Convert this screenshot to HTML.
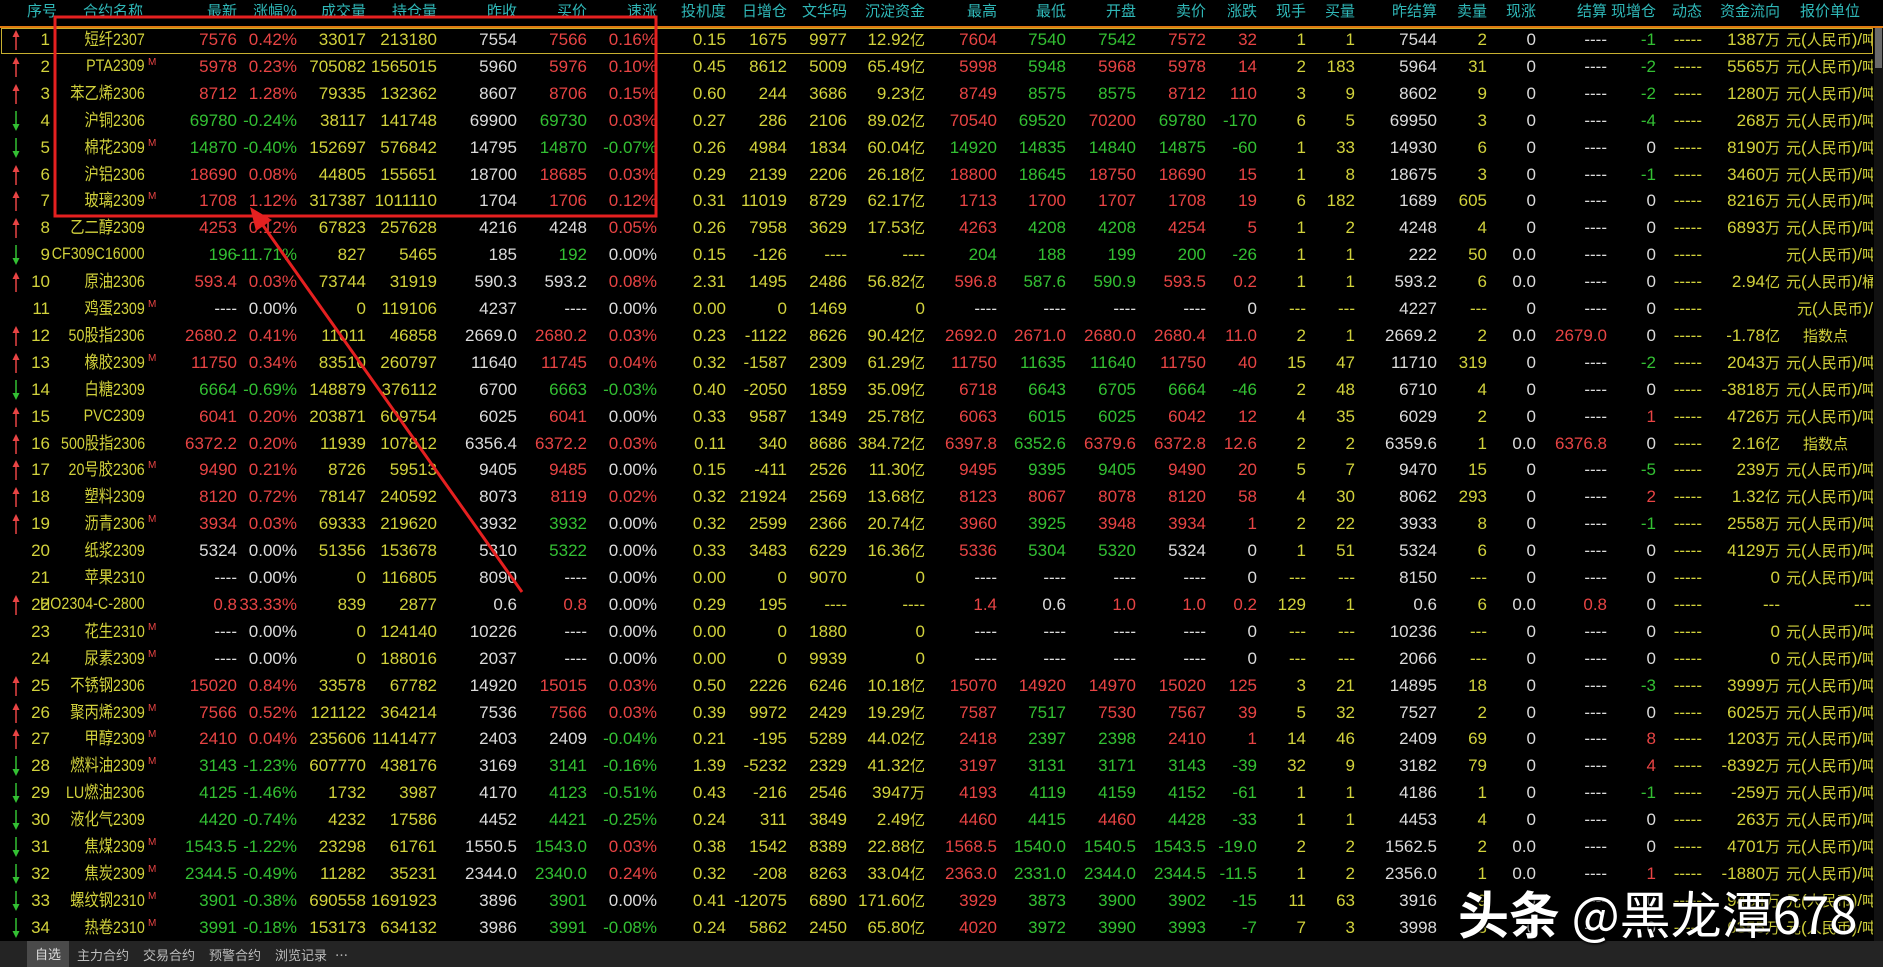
<!DOCTYPE html>
<html><head><meta charset="utf-8">
<style>
html,body{margin:0;padding:0;background:#000;width:1883px;height:967px;overflow:hidden;}
body{position:relative;font-family:"Liberation Sans","Noto Sans CJK SC",sans-serif;font-size:17px;}
.c{position:absolute;white-space:nowrap;line-height:20px;}
.r{text-align:right;}
.nm{display:inline-block;vertical-align:top;line-height:20px;height:20px;position:relative;top:-2px;font-family:"Liberation Sans","Noto Sans CJK SC",sans-serif;font-size:17px;transform:scaleX(0.84);transform-origin:right center;}
.nm.lat{top:-1px;}
.nm .cj{font-size:17px;line-height:20px;}
.cj{font-family:"Noto Sans CJK SC",sans-serif;font-size:15px;}
.h{color:#2fb8b8;font-size:15px;font-family:"Noto Sans CJK SC",sans-serif;}
.Y{color:#d2d23c}.W{color:#dcdcdc}.R{color:#e84444}.G{color:#33c033}
.m{color:#e84444;font-size:10px;position:relative;top:-7px;font-family:"Liberation Sans",sans-serif;}
#clip{position:absolute;left:0;top:0;width:1873px;height:941px;overflow:hidden;}
#tabs{position:absolute;left:0;top:941px;width:1883px;height:26px;background:#242424;font-family:"Noto Sans CJK SC",sans-serif;font-size:13px;color:#bdbdbd;}
#tabs span{position:absolute;top:4px;}
</style></head><body>
<div id="clip"></div>
<div style="position:absolute;left:0;top:26px;width:1883px;height:2px;background:#e07a10"></div>
<div style="position:absolute;left:1px;top:28px;width:1870px;height:24px;border:1px solid #c8b030"></div>
<div style="position:absolute;left:1874px;top:28px;width:9px;height:913px;background:#111"></div>
<div style="position:absolute;left:1875px;top:28px;width:7px;height:40px;background:#6a6a6a"></div>
<div id="tabs"><span style="left:27px;top:0;width:42px;height:26px;background:#4a4a4a;line-height:26px;text-align:center;color:#ddd">自选</span><span style="left:77px">主力合约</span><span style="left:143px">交易合约</span><span style="left:209px">预警合约</span><span style="left:275px">浏览记录</span><span style="left:335px">…</span></div>
<svg style="position:absolute;left:0;top:0" width="1883" height="967">
<rect x="55" y="17" width="601" height="199" fill="none" stroke="#e52020" stroke-width="3"/>
<line x1="522" y1="592" x2="262" y2="224" stroke="#e52020" stroke-width="3"/>
<polygon points="250,207 272,220 256,231" fill="#e52020"/>
</svg>
<div style="position:absolute;left:1458px;top:880px;font-family:'Noto Sans CJK SC',sans-serif;font-size:51px;line-height:64px;color:#fff;text-shadow:0 0 3px #000,1px 1px 2px #000;white-space:nowrap"><b>头条</b> @黑龙潭678</div>
<script>
var clip=document.getElementById('clip');
function add(x,y,txt,cls,right,extra){var d=document.createElement('div');d.className='c '+cls+(right?' r':'');
if(right){d.style.right=(1873-x)+'px';}else d.style.left=x+'px';d.style.top=y+'px';d.innerHTML=txt;if(extra)d.style.cssText+=extra;clip.appendChild(d);}
function cj(s){return s.replace(/([\u4e00-\u9fff（）]+)/g,'<span class="cj">$1</span>');}
var R=[237,297,366,437,517,587,657,726,787,847,925,997,1066,1136,1206,1257,1306,1355,1437,1487,1536,1607,1656,1702,1780];
var heads=['最新','涨幅%','成交量','持仓量','昨收','买价','速涨','投机度','日增仓','文华码','沉淀资金','最高','最低','开盘','卖价','涨跌','现手','买量','昨结算','卖量','现涨','结算','现增仓','动态','资金流向'];
add(27,1,'序号','h');add(143,1,'合约名称','h',1);
heads.forEach(function(h,i){add(R[i],1,h,'h',1);});
add(1860,1,'报价单位','h',1);
var D=[
['u','短纤2307',0,'7576','0.42%','33017','213180','7554','7566','0.16%','0.15','1675','9977','12.92亿','7604','7540','7542','7572','32','1','1','7544','2','0','----','-1','-----','1387万','元(人民币)/吨'],
['u','PTA2309',1,'5978','0.23%','705082','1565015','5960','5976','0.10%','0.45','8612','5009','65.49亿','5998','5948','5968','5978','14','2','183','5964','31','0','----','-2','-----','5565万','元(人民币)/吨'],
['u','苯乙烯2306',0,'8712','1.28%','79335','132362','8607','8706','0.15%','0.60','244','3686','9.23亿','8749','8575','8575','8712','110','3','9','8602','9','0','----','-2','-----','1280万','元(人民币)/吨'],
['d','沪铜2306',0,'69780','-0.24%','38117','141748','69900','69730','0.03%','0.27','286','2106','89.02亿','70540','69520','70200','69780','-170','6','5','69950','3','0','----','-4','-----','268万','元(人民币)/吨'],
['d','棉花2309',1,'14870','-0.40%','152697','576842','14795','14870','-0.07%','0.26','4984','1834','60.04亿','14920','14835','14840','14875','-60','1','33','14930','6','0','----','0','-----','8190万','元(人民币)/吨'],
['u','沪铝2306',0,'18690','0.08%','44805','155651','18700','18685','0.03%','0.29','2139','2206','26.18亿','18800','18645','18750','18690','15','1','8','18675','3','0','----','-1','-----','3460万','元(人民币)/吨'],
['u','玻璃2309',1,'1708','1.12%','317387','1011110','1704','1706','0.12%','0.31','11019','8729','62.17亿','1713','1700','1707','1708','19','6','182','1689','605','0','----','0','-----','8216万','元(人民币)/吨'],
['u','乙二醇2309',0,'4253','0.12%','67823','257628','4216','4248','0.05%','0.26','7958','3629','17.53亿','4263','4208','4208','4254','5','1','2','4248','4','0','----','0','-----','6893万','元(人民币)/吨'],
['d','CF309C16000',0,'196','-11.71%','827','5465','185','192','0.00%','0.15','-126','----','----','204','188','199','200','-26','1','1','222','50','0.0','----','0','-----','','元(人民币)/吨'],
['u','原油2306',0,'593.4','0.03%','73744','31919','590.3','593.2','0.08%','2.31','1495','2486','56.82亿','596.8','587.6','590.9','593.5','0.2','1','1','593.2','6','0.0','----','0','-----','2.94亿','元(人民币)/桶'],
['','鸡蛋2309',1,'----','0.00%','0','119106','4237','----','0.00%','0.00','0','1469','0','----','----','----','----','0','---','---','4227','---','0','----','0','-----','','元(人民币)/500千克'],
['u','50股指2306',0,'2680.2','0.41%','11011','46858','2669.0','2680.2','0.03%','0.23','-1122','8626','90.42亿','2692.0','2671.0','2680.0','2680.4','11.0','2','1','2669.2','2','0.0','2679.0','0','-----','-1.78亿','　指数点'],
['u','橡胶2309',1,'11750','0.34%','83510','260797','11640','11745','0.04%','0.32','-1587','2309','61.29亿','11750','11635','11640','11750','40','15','47','11710','319','0','----','-2','-----','2043万','元(人民币)/吨'],
['d','白糖2309',0,'6664','-0.69%','148879','376112','6700','6663','-0.03%','0.40','-2050','1859','35.09亿','6718','6643','6705','6664','-46','2','48','6710','4','0','----','0','-----','-3818万','元(人民币)/吨'],
['u','PVC2309',0,'6041','0.20%','203871','609754','6025','6041','0.00%','0.33','9587','1349','25.78亿','6063','6015','6025','6042','12','4','35','6029','2','0','----','1','-----','4726万','元(人民币)/吨'],
['u','500股指2306',0,'6372.2','0.20%','11939','107812','6356.4','6372.2','0.03%','0.11','340','8686','384.72亿','6397.8','6352.6','6379.6','6372.8','12.6','2','2','6359.6','1','0.0','6376.8','0','-----','2.16亿','　指数点'],
['u','20号胶2306',1,'9490','0.21%','8726','59513','9405','9485','0.00%','0.15','-411','2526','11.30亿','9495','9395','9405','9490','20','5','7','9470','15','0','----','-5','-----','239万','元(人民币)/吨'],
['u','塑料2309',0,'8120','0.72%','78147','240592','8073','8119','0.02%','0.32','21924','2569','13.68亿','8123','8067','8078','8120','58','4','30','8062','293','0','----','2','-----','1.32亿','元(人民币)/吨'],
['u','沥青2306',1,'3934','0.03%','69333','219620','3932','3932','0.00%','0.32','2599','2366','20.74亿','3960','3925','3948','3934','1','2','22','3933','8','0','----','-1','-----','2558万','元(人民币)/吨'],
['','纸浆2309',0,'5324','0.00%','51356','153678','5310','5322','0.00%','0.33','3483','6229','16.36亿','5336','5304','5320','5324','0','1','51','5324','6','0','----','0','-----','4129万','元(人民币)/吨'],
['','苹果2310',0,'----','0.00%','0','116805','8090','----','0.00%','0.00','0','9070','0','----','----','----','----','0','---','---','8150','---','0','----','0','-----','0','元(人民币)/吨'],
['u','HO2304-C-2800',0,'0.8','33.33%','839','2877','0.6','0.8','0.00%','0.29','195','----','----','1.4','0.6','1.0','1.0','0.2','129','1','0.6','6','0.0','0.8','0','-----','---','　　　　---'],
['','花生2310',1,'----','0.00%','0','124140','10226','----','0.00%','0.00','0','1880','0','----','----','----','----','0','---','---','10236','---','0','----','0','-----','0','元(人民币)/吨'],
['','尿素2309',1,'----','0.00%','0','188016','2037','----','0.00%','0.00','0','9939','0','----','----','----','----','0','---','---','2066','---','0','----','0','-----','0','元(人民币)/吨'],
['u','不锈钢2306',0,'15020','0.84%','33578','67782','14920','15015','0.03%','0.50','2226','6246','10.18亿','15070','14920','14970','15020','125','3','21','14895','18','0','----','-3','-----','3999万','元(人民币)/吨'],
['u','聚丙烯2309',1,'7566','0.52%','121122','364214','7536','7566','0.03%','0.39','9972','2429','19.29亿','7587','7517','7530','7567','39','5','32','7527','2','0','----','0','-----','6025万','元(人民币)/吨'],
['u','甲醇2309',1,'2410','0.04%','235606','1141477','2403','2409','-0.04%','0.21','-195','5289','44.02亿','2418','2397','2398','2410','1','14','46','2409','69','0','----','8','-----','1203万','元(人民币)/吨'],
['d','燃料油2309',1,'3143','-1.23%','607770','438176','3169','3141','-0.16%','1.39','-5232','2329','41.32亿','3197','3131','3171','3143','-39','32','9','3182','79','0','----','4','-----','-8392万','元(人民币)/吨'],
['d','LU燃油2306',0,'4125','-1.46%','1732','3987','4170','4123','-0.51%','0.43','-216','2546','3947万','4193','4119','4159','4152','-61','1','1','4186','1','0','----','-1','-----','-259万','元(人民币)/吨'],
['d','液化气2309',0,'4420','-0.74%','4232','17586','4452','4421','-0.25%','0.24','311','3849','2.49亿','4460','4415','4460','4428','-33','1','1','4453','4','0','----','0','-----','263万','元(人民币)/吨'],
['d','焦煤2309',1,'1543.5','-1.22%','23298','61761','1550.5','1543.0','0.03%','0.38','1542','8389','22.88亿','1568.5','1540.0','1540.5','1543.5','-19.0','2','2','1562.5','2','0.0','----','0','-----','4701万','元(人民币)/吨'],
['d','焦炭2309',1,'2344.5','-0.49%','11282','35231','2344.0','2340.0','0.24%','0.32','-208','8263','33.04亿','2363.0','2331.0','2344.0','2344.5','-11.5','1','2','2356.0','1','0.0','----','1','-----','-1880万','元(人民币)/吨'],
['d','螺纹钢2310',1,'3901','-0.38%','690558','1691923','3896','3901','0.00%','0.41','-12075','6890','171.60亿','3929','3873','3900','3902','-15','11','63','3916','9','0','----','0','-----','9484万','元(人民币)/吨'],
['d','热卷2310',1,'3991','-0.18%','153173','634132','3986','3991','-0.08%','0.24','5862','2450','65.80亿','4020','3972','3990','3993','-7','7','3','3998','3','0','----','0','-----','6355万','元(人民币)/吨']
];
function cmp(v,b){if(v.indexOf('-')===0&&v.length<3)return 'W';var a=parseFloat(v),c=parseFloat(b);if(isNaN(a)||isNaN(c))return 'W';return a>c?'R':(a<c?'G':'W');}
function sgn(v){if(v.charAt(0)==='-'&&v.length>1&&v.charAt(1)!=='-')return 'G';var a=parseFloat(v);if(isNaN(a)||a===0)return 'W';return 'R';}
var typ=['p','s','Y','Y','W','p','s','Y','Y','Y','Y','p','p','p','p','s','Y','Y','W','Y','W','p','s','Y','Y'];
D.forEach(function(r,i){
 var y=Math.round(30+i*26.9);
 if(r[0]){var col=r[0]==='u'?'#e84444':'#33c033';
  var svg=r[0]==='u'?'<svg width="10" height="22"><line x1="5" y1="4" x2="5" y2="21" stroke="'+col+'" stroke-width="1.5"/><polygon points="1.5,8 5,1 8.5,8" fill="'+col+'"/></svg>':'<svg width="10" height="22"><line x1="5" y1="1" x2="5" y2="18" stroke="'+col+'" stroke-width="1.5"/><polygon points="1.5,14 5,21 8.5,14" fill="'+col+'"/></svg>';
  add(11,y-1,svg,'','');}
 add(50,y,String(i+1),'Y',1);
 var lat=/[\u4e00-\u9fff]/.test(r[1])?'':' lat';
 add(145,y,'<span class="nm'+lat+'">'+cj(r[1])+'</span>','Y',1);
 if(r[2])add(148,y,'<span class="m">M</span>','','');
 var zjs=r[21];
 for(var k=0;k<25;k++){var v=r[3+k],t=typ[k],c;
  if(t==='p')c=cmp(v,zjs);else if(t==='s')c=sgn(v);else c=t;
  add(R[k],y,cj(v),c,1);}
 var ul=r[28];var lx=1786;if(ul.indexOf('500')>=0)lx=1797;
 add(lx,y,cj(ul),'Y','');
});
</script>
</body></html>
